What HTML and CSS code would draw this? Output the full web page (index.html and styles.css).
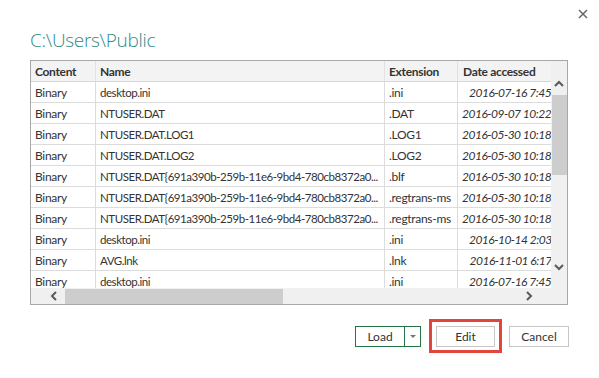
FILE: index.html
```html
<!DOCTYPE html>
<html lang="en">
<head>
  <meta charset="UTF-8">
  <title>C:\Users\Public</title>
  <link rel="stylesheet" href="styles.css">
</head>
<body>

  <div class="dialog">
    <div class="topbar">
      <button class="close" type="button" title="Close">
        <svg width="10" height="10" viewBox="0 0 10 10"><path d="M1 1L9 9M9 1L1 9" stroke="#666" stroke-width="1.5" fill="none"/></svg>
      </button>
    </div>

    <h1 class="title">C:\Users\Public</h1>

    <div class="frame">
      <div class="viewport">
        <table>
          <thead>
            <tr>
              <th class="c-content">Content</th>
              <th class="c-name">Name</th>
              <th class="c-ext">Extension</th>
              <th class="c-date">Date accessed</th>
            </tr>
          </thead>
          <tbody>
            <tr><td>Binary</td><td><div class="name">desktop.ini</div></td><td>.ini</td><td class="date">2016-07-16 7:45:51 AM</td></tr>
            <tr><td>Binary</td><td><div class="name">NTUSER.DAT</div></td><td>.DAT</td><td class="date">2016-09-07 10:22:13 AM</td></tr>
            <tr><td>Binary</td><td><div class="name">NTUSER.DAT.LOG1</div></td><td>.LOG1</td><td class="date">2016-05-30 10:18:02 AM</td></tr>
            <tr><td>Binary</td><td><div class="name">NTUSER.DAT.LOG2</div></td><td>.LOG2</td><td class="date">2016-05-30 10:18:02 AM</td></tr>
            <tr><td>Binary</td><td><div class="name">NTUSER.DAT{691a390b-259b-11e6-9bd4-780cb8372a0...</div></td><td>.blf</td><td class="date">2016-05-30 10:18:02 AM</td></tr>
            <tr><td>Binary</td><td><div class="name">NTUSER.DAT{691a390b-259b-11e6-9bd4-780cb8372a0...</div></td><td>.regtrans-ms</td><td class="date">2016-05-30 10:18:02 AM</td></tr>
            <tr><td>Binary</td><td><div class="name">NTUSER.DAT{691a390b-259b-11e6-9bd4-780cb8372a0...</div></td><td>.regtrans-ms</td><td class="date">2016-05-30 10:18:02 AM</td></tr>
            <tr><td>Binary</td><td><div class="name">desktop.ini</div></td><td>.ini</td><td class="date">2016-10-14 2:03:40 PM</td></tr>
            <tr><td>Binary</td><td><div class="name">AVG.lnk</div></td><td>.lnk</td><td class="date">2016-11-01 6:17:25 PM</td></tr>
            <tr><td>Binary</td><td><div class="name">desktop.ini</div></td><td>.ini</td><td class="date">2016-07-16 7:45:51 AM</td></tr>
          </tbody>
        </table>
      </div>

      <div class="vscroll">
        <div class="arrow">
          <svg width="10" height="7" viewBox="0 0 10 7"><path d="M1 6L5 2L9 6" stroke="#5a5a5a" stroke-width="2" fill="none"/></svg>
        </div>
        <div class="thumb"></div>
        <div class="track"></div>
        <div class="arrow">
          <svg width="10" height="7" viewBox="0 0 10 7"><path d="M1 1L5 5L9 1" stroke="#5a5a5a" stroke-width="2" fill="none"/></svg>
        </div>
      </div>

      <div class="hscroll">
        <div class="arrow">
          <svg width="7" height="10" viewBox="0 0 7 10"><path d="M6 1L2 5L6 9" stroke="#5a5a5a" stroke-width="2" fill="none"/></svg>
        </div>
        <div class="thumb"></div>
        <div class="track"></div>
        <div class="arrow">
          <svg width="7" height="10" viewBox="0 0 7 10"><path d="M1 1L5 5L1 9" stroke="#5a5a5a" stroke-width="2" fill="none"/></svg>
        </div>
      </div>

      <div class="corner"></div>
    </div>

    <div class="actions">
      <div class="split">
        <button class="split-main" type="button">Load</button>
        <button class="split-drop" type="button">
          <svg width="6" height="3" viewBox="0 0 6 3"><path d="M0 0H6L3 3Z" fill="#777"/></svg>
        </button>
      </div>
      <div class="highlight">
        <button class="btn edit" type="button">Edit</button>
      </div>
      <button class="btn cancel" type="button">Cancel</button>
    </div>
  </div>

</body>
</html>
```

FILE: styles.css
```css
body {
  margin: 0;
  font-family: Lato, "Noto Sans", sans-serif;
  color: #333;
  background: #fff;
}

.dialog {
  width: 599px;
  height: 378px;
  box-sizing: border-box;
  padding: 0 31px 0 30px;
}

.topbar {
  height: 27px;
  display: flex;
  justify-content: flex-end;
  align-items: center;
  margin-right: -25px;
}

.close {
  width: 20px;
  height: 20px;
  padding: 0;
  border: none;
  background: none;
  display: flex;
  align-items: center;
  justify-content: center;
  cursor: pointer;
}

.title {
  margin: 0 0 7px;
  font-family: "Open Sans", sans-serif;
  font-weight: 300;
  font-size: 19px;
  letter-spacing: -0.3px;
  line-height: 26px;
  color: #2e8c88;
}

.frame {
  height: 245px;
  box-sizing: border-box;
  border: 1px solid #a8a8a8;
  display: grid;
  grid-template-columns: 1fr 16px;
  grid-template-rows: 1fr 16px;
}

.viewport {
  overflow: hidden;
}

table {
  width: max-content;
  border-collapse: collapse;
  font-size: 12px;
  letter-spacing: -0.3px;
}

th, td {
  height: 20px;
  padding: 0 4px;
  border: 1px solid #dcdcdc;
  white-space: nowrap;
  text-align: left;
  line-height: 19px;
}

th {
  background: #f3f3f3;
  font-weight: bold;
  border-top: none;
  border-color: #e2e2e2;
  border-bottom-color: #d6d6d6;
}

th:first-child, td:first-child {
  border-left: none;
}

.c-content { width: 56px; }
.c-name { width: 280px; }
.c-ext { width: 64px; }
.c-date { padding-left: 5px; }

.name {
  width: 280px;
  overflow: hidden;
  text-overflow: ellipsis;
  font-size: 11.5px;
  letter-spacing: -0.45px;
}

.date {
  font-style: italic;
  text-align: right;
  letter-spacing: -0.5px;
}

.vscroll {
  background: #f0f0f0;
  display: flex;
  flex-direction: column;
  padding: 12px 0 10px;
}

.vscroll .arrow {
  height: 21px;
  display: flex;
  align-items: center;
  justify-content: center;
}

.vscroll .thumb {
  height: 80px;
  width: 15px;
  margin-top: 1px;
  align-self: flex-end;
  background: #cdcdcd;
}

.vscroll .track {
  flex: 1;
}

.hscroll {
  background: #f0f0f0;
  display: flex;
  padding: 0 11px 0 12px;
}

.hscroll .arrow {
  width: 21px;
  display: flex;
  align-items: center;
  justify-content: center;
}

.hscroll .thumb {
  width: 218px;
  margin: 1px 0 0 1px;
  background: #cdcdcd;
}

.hscroll .track {
  flex: 1;
}

.corner {
  background: #f0f0f0;
}

.actions {
  display: flex;
  justify-content: flex-end;
  align-items: center;
  gap: 7px;
  height: 34px;
  margin: 14px -1px 0 0;
}

.split {
  display: flex;
  height: 21px;
  box-sizing: border-box;
  border: 1px solid #217346;
  margin-right: 1px;
}

.split button {
  border: none;
  background: #fff;
  padding: 0;
  font: 12px Lato, sans-serif;
  color: #333;
  cursor: pointer;
}

.split-main {
  width: 48px;
}

.split-drop {
  width: 16px;
  border-left: 1px solid #217346 !important;
  display: flex;
  align-items: center;
  justify-content: center;
}

.highlight {
  border: 3px solid #e2443e;
  padding: 4px 4px 3px;
}

.btn {
  display: block;
  height: 21px;
  box-sizing: border-box;
  border: 1px solid #c6c6c6;
  background: #fff;
  padding: 0;
  font: 12px Lato, sans-serif;
  color: #333;
  cursor: pointer;
}

.edit { width: 59px; }
.cancel { width: 60px; }
```
